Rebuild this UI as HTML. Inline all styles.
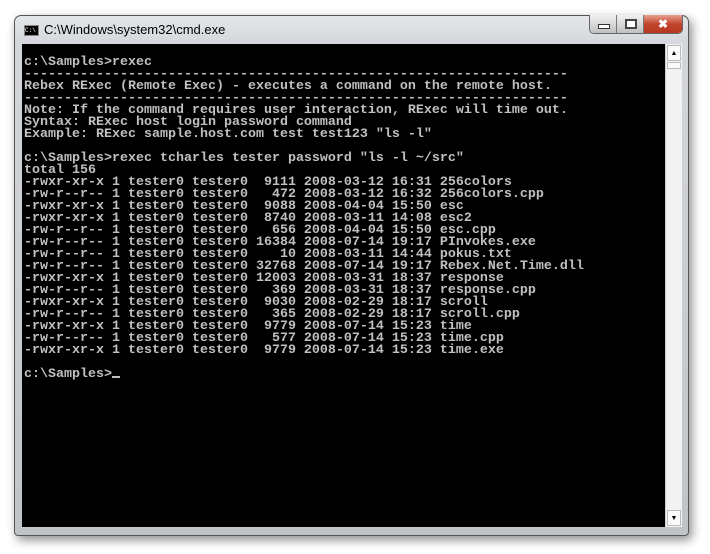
<!DOCTYPE html>
<html><head><style>
body{margin:0;width:710px;height:554px;background:#fff;position:relative;overflow:hidden}
.win{position:absolute;left:14px;top:15px;width:675px;height:521px;border-radius:7px 7px 4px 4px;
background:linear-gradient(180deg,#e4e6e9 0,#d3d6da 30px,#c0c3c7 100%);border:1px solid #555;box-shadow:3px 4px 10px rgba(0,0,0,.45);box-sizing:border-box}
.title{position:absolute;left:44px;top:22px;font:13px "Liberation Sans",sans-serif;color:#000}
.icon{position:absolute;left:24px;top:25px;width:15px;height:11px;background:#000;border:1px solid #888;box-sizing:border-box;color:#fff;font:6px "Liberation Mono",monospace;line-height:9px;overflow:hidden}
.btns{position:absolute;left:589px;top:15px;height:18px;width:92px;border:1px solid #666;border-top:none;border-radius:0 0 5px 5px;overflow:hidden;display:flex}
.b{width:26px;height:18px;background:linear-gradient(#f0f0f0,#c0c0c0);border-right:1px solid #777;position:relative}
.x{flex:1;background:linear-gradient(#e8a090,#c2452e 50%,#b83820);color:#fff;font:bold 12px "Liberation Sans",sans-serif;text-align:center;line-height:18px}
.con{position:absolute;left:22px;top:44px;width:643px;height:483px;background:#000}
.sb{position:absolute;left:665px;top:44px;width:16px;height:483px;background:#f2f2f2;border-left:1px solid #ccc}
.arr{position:absolute;left:1px;width:14px;height:16px;background:#fafafa;border:1px solid #bbb;box-sizing:border-box;font-size:7px;text-align:center;line-height:15px}
pre{position:absolute;left:24px;top:57px;margin:0;font:bold 13.33px/12px "Liberation Mono",monospace;color:#c0c0c0;letter-spacing:0}
.cur{display:inline-block;width:8px;height:2px;background:#c0c0c0;vertical-align:-1px}
</style></head><body>
<div class="win"></div>
<div class="icon">C:\</div>
<div class="title">C:\Windows\system32\cmd.exe</div>
<div class="btns"><div class="b"><div style="position:absolute;left:8px;top:9px;width:10px;height:3px;border:1px solid #333;background:#fff"></div></div><div class="b"><div style="position:absolute;left:8px;top:4px;width:8px;height:6px;border:2px solid #444;background:#fff"></div></div><div class="x">✖</div></div>
<div class="con"></div>
<div class="sb"><div class="arr" style="top:1px">▲</div><div class="arr" style="top:18px;height:7px"></div><div class="arr" style="bottom:1px">▼</div></div>
<pre>c:\Samples&gt;rexec
--------------------------------------------------------------------
Rebex RExec (Remote Exec) - executes a command on the remote host.
--------------------------------------------------------------------
Note: If the command requires user interaction, RExec will time out.
Syntax: RExec host login password command
Example: RExec sample.host.com test test123 "ls -l"

c:\Samples&gt;rexec tcharles tester password "ls -l ~/src"
total 156
-rwxr-xr-x 1 tester0 tester0  9111 2008-03-12 16:31 256colors
-rw-r--r-- 1 tester0 tester0   472 2008-03-12 16:32 256colors.cpp
-rwxr-xr-x 1 tester0 tester0  9088 2008-04-04 15:50 esc
-rwxr-xr-x 1 tester0 tester0  8740 2008-03-11 14:08 esc2
-rw-r--r-- 1 tester0 tester0   656 2008-04-04 15:50 esc.cpp
-rw-r--r-- 1 tester0 tester0 16384 2008-07-14 19:17 PInvokes.exe
-rw-r--r-- 1 tester0 tester0    10 2008-03-11 14:44 pokus.txt
-rw-r--r-- 1 tester0 tester0 32768 2008-07-14 19:17 Rebex.Net.Time.dll
-rwxr-xr-x 1 tester0 tester0 12003 2008-03-31 18:37 response
-rw-r--r-- 1 tester0 tester0   369 2008-03-31 18:37 response.cpp
-rwxr-xr-x 1 tester0 tester0  9030 2008-02-29 18:17 scroll
-rw-r--r-- 1 tester0 tester0   365 2008-02-29 18:17 scroll.cpp
-rwxr-xr-x 1 tester0 tester0  9779 2008-07-14 15:23 time
-rw-r--r-- 1 tester0 tester0   577 2008-07-14 15:23 time.cpp
-rwxr-xr-x 1 tester0 tester0  9779 2008-07-14 15:23 time.exe

c:\Samples&gt;<span class="cur"></span></pre>
</body></html>
